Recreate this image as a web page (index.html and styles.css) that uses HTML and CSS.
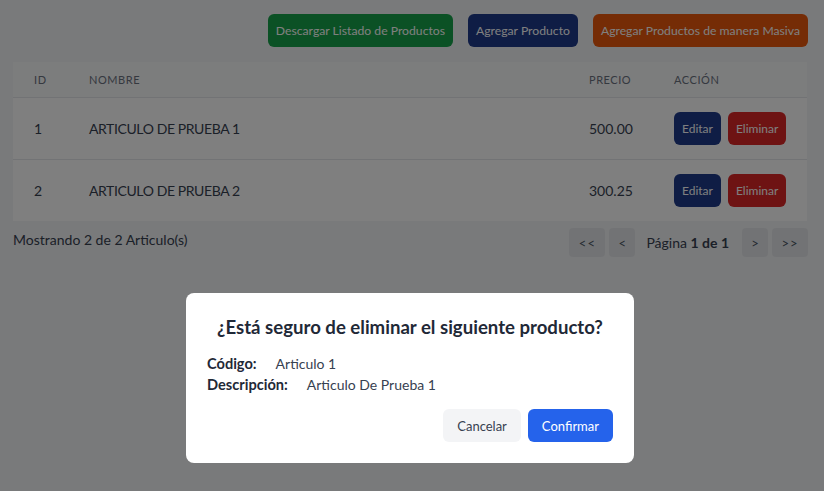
FILE: index.html
```html
<!DOCTYPE html>
<html lang="es">
<head>
<meta charset="utf-8">
<title>Productos</title>
<link rel="stylesheet" href="styles.css">
</head>
<body>
<div class="page">
  <div class="toolbar">
    <button class="btn btn-green">Descargar Listado de Productos</button>
    <button class="btn btn-navy">Agregar Producto</button>
    <button class="btn btn-orange">Agregar Productos de manera Masiva</button>
  </div>
  <table class="grid">
    <colgroup>
      <col class="c-id"><col class="c-name"><col class="c-price"><col class="c-act">
    </colgroup>
    <thead>
      <tr><th>ID</th><th>Nombre</th><th>Precio</th><th>Acción</th></tr>
    </thead>
    <tbody>
      <tr>
        <td>1</td><td class="name">ARTICULO DE PRUEBA 1</td><td>500.00</td>
        <td><div class="acts"><button class="sbtn btn-navy">Editar</button><button class="sbtn btn-red">Eliminar</button></div></td>
      </tr>
      <tr>
        <td>2</td><td class="name">ARTICULO DE PRUEBA 2</td><td>300.25</td>
        <td><div class="acts"><button class="sbtn btn-navy">Editar</button><button class="sbtn btn-red">Eliminar</button></div></td>
      </tr>
    </tbody>
  </table>
  <div class="footer">
    <span class="count">Mostrando 2 de 2 Articulo(s)</span>
    <div class="pager">
      <button class="pbtn pw">&lt;&lt;</button>
      <button class="pbtn">&lt;</button>
      <span class="plabel">Página <b>1 de 1</b></span>
      <button class="pbtn">&gt;</button>
      <button class="pbtn pw">&gt;&gt;</button>
    </div>
  </div>
</div>
<div class="overlay">
  <div class="modal">
    <h2 class="mtitle">¿Está seguro de eliminar el siguiente producto?</h2>
    <p class="mrow"><b class="mlabel">Código:</b>Articulo 1</p>
    <p class="mrow"><b class="mlabel">Descripción:</b>Articulo De Prueba 1</p>
    <div class="mactions">
      <button class="mbtn mcancel">Cancelar</button>
      <button class="mbtn mconfirm">Confirmar</button>
    </div>
  </div>
</div>
</body>
</html>
```
FILE: styles.css
```css
* { box-sizing: border-box; }
html, body { margin: 0; padding: 0; }
body {
  font-family: Lato, "Noto Sans", sans-serif;
  background: #f3f4f6;
  color: #374151;
  width: 824px;
  height: 491px;
  overflow: hidden;
}
button { font-family: inherit; border: 0; cursor: pointer; }
.page { padding: 14px 16px 0 13px; }
.toolbar { display: flex; justify-content: flex-end; gap: 15px; }
.btn {
  height: 33px; padding: 0 8px; border-radius: 6px;
  color: #fff; font-size: 12.2px;
}
.btn-green { background: #16a34a; }
.btn-navy { background: #1e3a8a; }
.btn-orange { background: #ea580c; }
.btn-red { background: #dc2626; }

.grid {
  margin-top: 15px; width: 794px; border-collapse: collapse;
  table-layout: fixed; background: #fff;
}
.c-id { width: 55px; } .c-name { width: 500px; } .c-price { width: 85px; } .c-act { width: 154px; }
.grid th {
  text-align: left; font-weight: 400; font-size: 11px; letter-spacing: 0.05em;
  text-transform: uppercase; color: #6b7280; background: #f9fafb;
  padding: 0 21px; height: 35px; border-bottom: 1px solid #e5e7eb;
}
.grid td {
  padding: 14px 21px; font-size: 14px; color: #374151; height: 62px;
}
.grid td.name { letter-spacing: -0.4px; }
.grid tbody tr + tr td { border-top: 1px solid #e5e7eb; }
.acts { display: flex; gap: 7px; }
.sbtn { height: 33px; padding: 0 8px; border-radius: 6px; color: #fff; font-size: 12px; }

.footer { display: flex; justify-content: space-between; align-items: flex-start; margin-top: 7px; }
.count { font-size: 14px; padding-top: 3px; color: #374151; }
.pager { display: flex; align-items: center; gap: 4px; }
.pbtn {
  height: 29px; width: 26px; padding: 0; border-radius: 4px;
  background: #e5e7eb; color: #4b5563; font-size: 13px;
}
.pw { width: 36px; letter-spacing: 1px; }
.plabel { font-size: 14px; color: #374151; margin: 0 9px 0 7px; }
.plabel b { font-weight: 700; }

.overlay {
  position: fixed; inset: 0; background: rgba(0, 0, 0, 0.5);
  display: flex; justify-content: center; align-items: flex-start;
  padding: 293px 4px 0 0;
}
.modal {
  width: 448px; background: #fff; border-radius: 8px;
  padding: 20px 21px 21px 21px;
}
.mtitle {
  margin: 0 0 12px; text-align: center; font-size: 18.6px; line-height: 28px;
  font-weight: 700; color: #1f2937;
}
.mrow { margin: 0; font-size: 14px; line-height: 21px; color: #374151; }
.mlabel { font-weight: 700; font-size: 14.6px; color: #1f2937; margin-right: 19px; }
.mactions { display: flex; justify-content: flex-end; gap: 7px; margin-top: 14px; }
.mbtn { height: 33px; padding: 0 14px; border-radius: 6px; font-size: 13px; }
.mcancel { background: #f3f4f6; color: #374151; }
.mconfirm { background: #2563eb; color: #fff; }
```
